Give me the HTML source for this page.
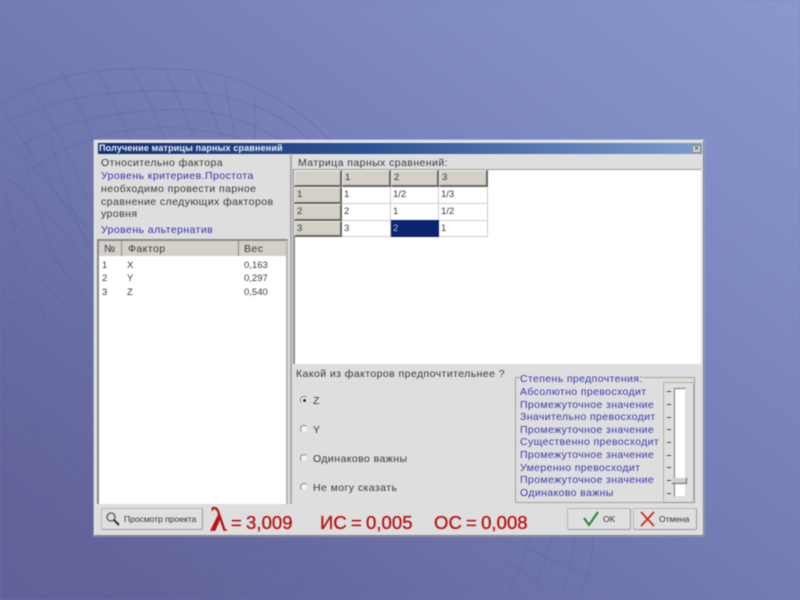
<!DOCTYPE html>
<html lang="ru">
<head>
<meta charset="utf-8">
<style>
html,body{margin:0;padding:0;width:800px;height:600px;overflow:hidden}
body{position:relative;background:#757cb4;font-family:"Liberation Sans","DejaVu Sans",sans-serif}
div{position:absolute;box-sizing:border-box;white-space:nowrap}
#wrap{left:0;top:0;width:800px;height:600px;overflow:hidden;filter:blur(.45px);background:linear-gradient(217deg,#8a98ce 0%,#7d88c0 30%,#7077af 58%,#63649c 88%,#61619a 100%)}
.t{font-size:10.5px;line-height:13px;color:#3a3a3a;letter-spacing:.43px;margin-top:1px}
.b{color:#3434b0}
.c{font-size:9.5px;line-height:12px;color:#3a3a3a;margin-top:1px}
.h{background:#d4d0c8;border-right:2px solid #666;border-bottom:2px solid #666;border-top:1px solid #f2f2f2;border-left:1px solid #f2f2f2;line-height:14px!important}
.w{background:#fff;border-right:1px solid #ccc;border-bottom:1px solid #ccc}
.cell{font-size:9.5px;line-height:16px;color:#3a3a3a;padding-left:2px}
.s{font-size:10.5px;line-height:12.6px;color:#3a3ab4;letter-spacing:.38px;margin-top:1px}
.r{width:8px;height:8px;border-radius:50%;background:#f4f4f4;border:1px solid #888;border-right-color:#ddd;border-bottom-color:#ddd}
.red{font-size:18.5px;line-height:20px;color:#b81414;-webkit-text-stroke:.35px #b81414;letter-spacing:.05px;word-spacing:-1px;margin-top:1px}
.btn{background:#dfdfdf;border:1px solid #b9b9b9;border-right-color:#999;border-bottom-color:#999;border-radius:2px}
</style>
</head>
<body>
<div id="wrap">
<svg width="800" height="600" style="position:absolute;left:0;top:0" fill="none" stroke="#5d6199" stroke-opacity=".42" stroke-width="1">
<path d="M0 104C60 66 130 66 190 70C240 74 290 100 330 140"/>
<path d="M10 120C70 92 140 88 195 92C240 96 280 112 310 140"/>
<path d="M20 145C70 118 130 108 190 110C225 112 255 124 280 140"/>
<path d="M30 170C70 140 125 125 180 128C205 130 225 134 245 140"/>
<path d="M0 105C30 150 60 200 94 250M30 87C60 130 80 180 94 215M62 72C80 105 90 130 94 145M95 68C110 90 120 115 130 140M130 68C145 90 155 115 165 140M165 70C175 90 185 115 195 140M195 72C205 95 215 118 222 140M225 80C228 100 232 120 235 140M255 95C255 110 255 125 255 140"/>
<path d="M0 135C30 160 60 200 94 235M0 175C30 190 60 225 94 275M0 215C30 230 60 260 94 310M0 255C30 265 60 295 94 345M0 300C30 305 60 325 94 370"/>
<path d="M5 190C15 240 35 300 60 350M25 160C35 210 55 270 94 320M50 135C60 180 75 220 94 260"/>
<path d="M0 420L94 540M35 425L94 480M0 380L94 450M35 425L50 500L94 470M50 500L140 600M35 425L10 445"/>
<path d="M120 536L170 600M160 536L190 600M205 536L215 600M250 536L240 600M290 536L270 580M330 536L290 600M120 560L300 540M180 590L330 545"/>
<path d="M500 536L590 577M505 560L550 590M530 536C525 560 515 580 508 592M552 536C548 555 540 575 535 590M575 536C573 555 568 575 563 592M593 536C593 550 588 575 582 590"/>
</svg>

<!-- dialog -->
<div style="left:94px;top:140px;width:610px;height:396px;background:#dedede;border:1px solid #f0f0f0;border-right-color:#808080;border-bottom-color:#808080;box-shadow:0 0 0 1px rgba(200,200,200,.35)"></div>
<div style="left:98px;top:143px;width:604px;height:11px;background:linear-gradient(90deg,#12306f 0%,#2f5296 45%,#7d9ccb 100%)"></div>
<div style="left:99px;top:143px;height:11px;font-size:9px;line-height:11px;font-weight:bold;color:#f2f2ff;letter-spacing:.16px">Получение матрицы парных сравнений</div>
<div style="left:692px;top:145px;width:9px;height:8px;background:#d8d8d8;border:1px solid #888;font-size:8px;line-height:6px;text-align:center;color:#222">×</div>

<!-- left info -->
<div class="t" style="left:101px;top:156px">Относительно фактора</div>
<div class="t b" style="left:101px;top:169px">Уровень критериев.Простота</div>
<div class="t" style="left:101px;top:182px">необходимо провести парное</div>
<div class="t" style="left:101px;top:195px">сравнение следующих факторов</div>
<div class="t" style="left:101px;top:207px">уровня</div>
<div class="t b" style="left:101px;top:223px">Уровень альтернатив</div>

<!-- left list -->
<div style="left:97px;top:239px;width:191px;height:265px;background:#fff;border:2px solid #8a8a86;border-bottom:0;border-right-color:#b5b5b0"></div>
<div style="left:99px;top:241px;width:187px;height:15px;background:#d4d0c8"></div>
<div style="left:121px;top:241px;width:1px;height:15px;background:#888"></div>
<div style="left:238px;top:241px;width:1px;height:15px;background:#888"></div>
<div class="t" style="left:104px;top:242px">№</div>
<div class="t" style="left:128px;top:242px">Фактор</div>
<div class="t" style="left:244px;top:242px">Вес</div>
<div class="c" style="left:102px;top:259px">1</div><div class="c" style="left:127px;top:259px">X</div><div class="c" style="left:244px;top:259px">0,163</div>
<div class="c" style="left:102px;top:272px">2</div><div class="c" style="left:127px;top:272px">Y</div><div class="c" style="left:244px;top:272px">0,297</div>
<div class="c" style="left:102px;top:286px">3</div><div class="c" style="left:127px;top:286px">Z</div><div class="c" style="left:244px;top:286px">0,540</div>

<!-- splitter -->
<div style="left:290px;top:155px;width:2px;height:349px;background:#a9a9a9"></div>

<!-- matrix -->
<div class="t" style="left:298px;top:156px">Матрица парных сравнений:</div>
<div style="left:293px;top:169px;width:408px;height:195px;background:#fff;border-left:2px solid #8a8a86;border-top:1px solid #999"></div>
<div class="h" style="left:294px;top:170px;width:48px;height:17px"></div>
<div class="h cell" style="left:342px;top:170px;width:49px;height:17px">1</div>
<div class="h cell" style="left:391px;top:170px;width:48px;height:17px">2</div>
<div class="h cell" style="left:439px;top:170px;width:49px;height:17px">3</div>
<div class="h cell" style="left:294px;top:187px;width:48px;height:17px">1</div>
<div class="h cell" style="left:294px;top:204px;width:48px;height:17px">2</div>
<div class="h cell" style="left:294px;top:221px;width:48px;height:16px">3</div>
<div class="w cell" style="left:342px;top:187px;width:49px;height:17px">1</div>
<div class="w cell" style="left:391px;top:187px;width:48px;height:17px">1/2</div>
<div class="w cell" style="left:439px;top:187px;width:49px;height:17px">1/3</div>
<div class="w cell" style="left:342px;top:204px;width:49px;height:17px">2</div>
<div class="w cell" style="left:391px;top:204px;width:48px;height:17px">1</div>
<div class="w cell" style="left:439px;top:204px;width:49px;height:17px">1/2</div>
<div class="w cell" style="left:342px;top:221px;width:49px;height:16px">3</div>
<div class="cell" style="left:391px;top:220px;width:48px;height:17px;background:#0c2470;color:#b8c4e8;line-height:18px">2</div>
<div class="w cell" style="left:439px;top:221px;width:49px;height:16px">1</div>

<!-- question -->
<div class="t" style="left:296px;top:367px">Какой из факторов предпочтительнее ?</div>
<div class="r" style="left:300px;top:396px"></div>
<div style="left:303px;top:399px;width:3px;height:3px;border-radius:50%;background:#222"></div>
<div class="t" style="left:313px;top:394px">Z</div>
<div class="r" style="left:300px;top:425px"></div>
<div class="t" style="left:313px;top:423px">Y</div>
<div class="r" style="left:300px;top:454px"></div>
<div class="t" style="left:313px;top:452px">Одинаково важны</div>
<div class="r" style="left:300px;top:483px"></div>
<div class="t" style="left:313px;top:481px">Не могу сказать</div>

<!-- scale group -->
<div style="left:515px;top:377px;width:180px;height:126px;border:1px solid #a0a0a0"></div>
<div class="s" style="left:520px;top:372px;background:#dedede">Степень предпочтения:</div>
<div class="s" style="left:520px;top:385px">Абсолютно превосходит</div>
<div class="s" style="left:520px;top:398px">Промежуточное значение</div>
<div class="s" style="left:520px;top:410px">Значительно превосходит</div>
<div class="s" style="left:520px;top:423px">Промежуточное значение</div>
<div class="s" style="left:520px;top:435px">Существенно превосходит</div>
<div class="s" style="left:520px;top:448px">Промежуточное значение</div>
<div class="s" style="left:520px;top:461px">Умеренно превосходит</div>
<div class="s" style="left:520px;top:473px">Промежуточное значение</div>
<div class="s" style="left:520px;top:486px">Одинаково важны</div>
<!-- slider -->
<div style="left:663px;top:382px;width:31px;height:121px;border:1px dotted #8a8a4a"></div>
<div style="left:674px;top:388px;width:12px;height:109px;background:#fff;border:1px solid #777;border-right-color:#ddd;border-bottom-color:#ddd"></div>
<div style="left:672px;top:478px;width:15px;height:6px;background:#cfcfcf;border-bottom:1px solid #666;border-right:1px solid #666"></div>
<svg width="6" height="110" style="position:absolute;left:667px;top:388px" stroke="#444"><path d="M0 3.500h4M0 16.500h4M0 29.500h4M0 41.500h4M0 54.500h4M0 67.500h4M0 79.500h4M0 92.500h4M0 105.500h4"/></svg>

<!-- buttons -->
<div class="btn" style="left:101px;top:508px;width:102px;height:22px"></div>
<svg width="16" height="16" viewBox="0 0 16 16" style="position:absolute;left:105px;top:511px" fill="none"><circle cx="6" cy="6" r="4" stroke="#555" stroke-width="1.3"/><path d="M9 9l5 5" stroke="#333" stroke-width="2"/></svg>
<div style="left:124px;top:513px;font-size:8.5px;line-height:12px;color:#333">Просмотр проекта</div>

<div style="left:210px;top:504px;font-family:'Liberation Serif',serif;font-weight:bold;font-size:34px;line-height:34px;color:#b81414">λ</div>
<div class="red" style="left:231px;top:512px">= 3,009</div>
<div class="red" style="left:320px;top:512px">ИС = 0,005</div>
<div class="red" style="left:434px;top:512px">ОС = 0,008</div>

<div class="btn" style="left:567px;top:508px;width:64px;height:22px"></div>
<svg width="16" height="16" viewBox="0 0 16 16" style="position:absolute;left:583px;top:511px" fill="none"><path d="M1 7l5 7L15 1" stroke="#1e8a2e" stroke-width="2"/></svg>
<div style="left:603px;top:513px;font-size:8.5px;line-height:12px;color:#333">OK</div>
<div class="btn" style="left:633px;top:508px;width:64px;height:22px"></div>
<svg width="16" height="16" viewBox="0 0 16 16" style="position:absolute;left:640px;top:511px" fill="none"><path d="M1 1l13 14M14 1L1 15" stroke="#d02a1e" stroke-width="1.7"/></svg>
<div style="left:659px;top:513px;font-size:8.5px;line-height:12px;color:#333">Отмена</div>
</div>
</body>
</html>
